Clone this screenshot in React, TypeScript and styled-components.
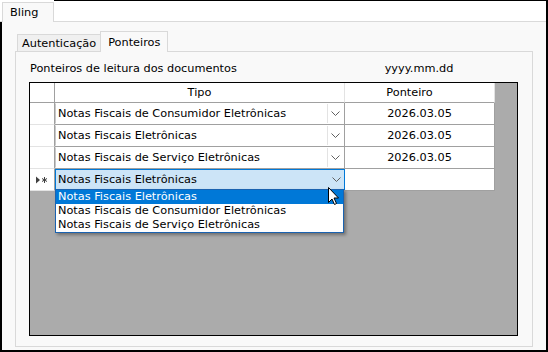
import React from 'react';
import styled, { createGlobalStyle } from 'styled-components';

const GlobalStyle = createGlobalStyle`
  html, body { margin: 0; padding: 0; background: #fff; }
  body {
    font-family: "DejaVu Sans", "Liberation Sans", sans-serif;
    font-size: 11.3px;
    color: #000;
  }
  * { box-sizing: border-box; }
`;

const Frame = styled.div`
  width: 548px;
  height: 352px;
  display: flex;
  flex-direction: column;
  border-right: 2px solid #000;
  border-bottom: 2px solid #000;
  background: #f9f9f9;
`;

const TabStrip = styled.div`
  display: flex;
  height: 22px;
  background: #fff;
`;

const StripEdge = styled.div`
  width: 2px;
  border-bottom: 1px solid #dadada;
`;

const OuterTab = styled.div`
  width: 52px;
  height: 20px;
  margin-top: 2px;
  padding-left: 7px;
  display: flex;
  align-items: center;
  background: #f9f9f9;
  border: 1px solid #d9d9d9;
  border-bottom: none;
`;

const StripFiller = styled.div`
  flex: 1;
  border-top: 1px solid #000;
  border-bottom: 1px solid #dadada;
`;

const OuterPage = styled.div`
  flex: 1;
  display: flex;
  flex-direction: column;
  border-left: 2px solid #000;
  padding: 9px 13px 3px 13px;
`;

const InnerStrip = styled.div`
  display: flex;
  align-items: flex-end;
  height: 21px;
  padding-left: 2px;
  margin-bottom: -1px;
  position: relative;
  z-index: 1;
`;

const InnerTab = styled.div<{ $active?: boolean }>`
  height: ${(p) => (p.$active ? 21 : 18)}px;
  padding: 0 ${(p) => (p.$active ? 7 : 4)}px;
  margin-left: ${(p) => (p.$active ? -1 : 0)}px;
  display: flex;
  align-items: center;
  white-space: nowrap;
  background: ${(p) => (p.$active ? '#f9f9f9' : '#f0f0f0')};
  border: 1px solid #d9d9d9;
  border-bottom: ${(p) => (p.$active ? 'none' : '1px solid #d9d9d9')};
`;

const InnerPage = styled.div`
  flex: 1;
  display: flex;
  flex-direction: column;
  border: 1px solid #d9d9d9;
  padding: 10px 14px 10px 13px;
  background: #f9f9f9;
`;

const LabelRow = styled.div`
  display: grid;
  grid-template-columns: 315px 150px;
  line-height: 14px;
  margin-bottom: 6px;
  white-space: nowrap;
`;

const Caption = styled.span<{ $center?: boolean }>`
  padding-left: ${(p) => (p.$center ? 0 : 1)}px;
  text-align: ${(p) => (p.$center ? 'center' : 'left')};
`;

const Grid = styled.div`
  flex: 1;
  display: flex;
  flex-direction: column;
  border: 1px solid #000;
  background: #ababab;
`;

const Row = styled.div<{ $h: number }>`
  display: grid;
  grid-template-columns: 25px 290px 150px;
  height: ${(p) => p.$h}px;
`;

const HeadCell = styled.div<{ $padRight?: number; $edge?: boolean }>`
  background: #fff;
  border-right: 1px solid ${(p) => (p.$edge ? '#a0a0a0' : '#e3e3e3')};
  border-bottom: 1px solid #a0a0a0;
  display: flex;
  align-items: center;
  justify-content: center;
  padding-right: ${(p) => p.$padRight ?? 0}px;
`;

const RowHead = styled.div`
  background: #fff;
  border-right: 1px solid #a0a0a0;
  border-bottom: 1px solid #e3e3e3;
  display: flex;
  align-items: center;
  justify-content: center;
`;

const TipoCell = styled.div`
  position: relative;
  background: #fff;
  border-right: 1px solid #a0a0a0;
  border-bottom: 1px solid #a0a0a0;
`;

const Combo = styled.div<{ $open?: boolean }>`
  height: 21px;
  display: flex;
  align-items: center;
  padding-left: 2px;
  white-space: nowrap;
  background: ${(p) => (p.$open ? '#cce4f7' : '#fff')};
  border: 1px solid ${(p) => (p.$open ? '#0078d7' : 'transparent')};
  border-left-color: ${(p) => (p.$open ? '#0078d7' : '#c8c8c8')};
  margin-right: ${(p) => (p.$open ? -1 : 0)}px;
`;

const ComboText = styled.span`
  flex: 1;
`;

const DropButton = styled.div<{ $open?: boolean }>`
  width: 16px;
  height: 100%;
  display: flex;
  align-items: center;
  justify-content: center;
  border-left: 1px solid ${(p) => (p.$open ? 'transparent' : '#e3e3e3')};
`;

const DateCell = styled.div`
  background: #fff;
  border-right: 1px solid #a0a0a0;
  border-bottom: 1px solid #a0a0a0;
  display: flex;
  align-items: center;
  justify-content: center;
`;

const DropList = styled.div`
  position: absolute;
  top: 20px;
  left: 0;
  width: 289px;
  z-index: 2;
  background: #fff;
  border: 1px solid #1a62b0;
  box-shadow: 2px 2px 3px rgba(0, 0, 0, 0.35);
`;

const DropItem = styled.div<{ $selected?: boolean }>`
  height: 14px;
  line-height: 14px;
  padding-left: 2px;
  white-space: nowrap;
  background: ${(p) => (p.$selected ? '#0078d7' : '#fff')};
  color: ${(p) => (p.$selected ? '#fff' : '#000')};
`;

const Pointer = styled.svg`
  position: absolute;
  left: 273px;
  top: 18px;
  z-index: 3;
`;

const Chevron = () => (
  <svg width="9" height="5" viewBox="0 0 9 5">
    <polyline points="0.5,0.5 4.5,4.5 8.5,0.5" fill="none" stroke="#606060" strokeWidth="1" />
  </svg>
);

const NewRowGlyph = () => (
  <svg width="12" height="8" viewBox="0 0 12 8">
    <polygon points="0,0.5 4,4 0,7.5" fill="#404040" />
    <g stroke="#404040" strokeWidth="1">
      <line x1="8.5" y1="1" x2="8.5" y2="7" />
      <line x1="6" y1="2.5" x2="11" y2="5.5" />
      <line x1="6" y1="5.5" x2="11" y2="2.5" />
    </g>
  </svg>
);

const tipos = [
  'Notas Fiscais Eletrônicas',
  'Notas Fiscais de Consumidor Eletrônicas',
  'Notas Fiscais de Serviço Eletrônicas',
];

const rows = [
  { tipo: tipos[1], ponteiro: '2026.03.05' },
  { tipo: tipos[0], ponteiro: '2026.03.05' },
  { tipo: tipos[2], ponteiro: '2026.03.05' },
];

export default function App() {
  return (
    <>
      <GlobalStyle />
      <Frame>
        <TabStrip>
          <StripEdge />
          <OuterTab>Bling</OuterTab>
          <StripFiller />
        </TabStrip>
        <OuterPage>
          <InnerStrip>
            <InnerTab>Autenticação</InnerTab>
            <InnerTab $active>Ponteiros</InnerTab>
          </InnerStrip>
          <InnerPage>
            <LabelRow>
              <Caption>Ponteiros de leitura dos documentos</Caption>
              <Caption $center>yyyy.mm.dd</Caption>
            </LabelRow>
            <Grid>
              <Row $h={20}>
                <HeadCell $edge />
                <HeadCell>Tipo</HeadCell>
                <HeadCell $padRight={20}>Ponteiro</HeadCell>
              </Row>
              {rows.map((r, i) => (
                <Row $h={22} key={i}>
                  <RowHead />
                  <TipoCell>
                    <Combo>
                      <ComboText>{r.tipo}</ComboText>
                      <DropButton>
                        <Chevron />
                      </DropButton>
                    </Combo>
                  </TipoCell>
                  <DateCell>{r.ponteiro}</DateCell>
                </Row>
              ))}
              <Row $h={22}>
                <RowHead>
                  <NewRowGlyph />
                </RowHead>
                <TipoCell>
                  <Combo $open>
                    <ComboText>{tipos[0]}</ComboText>
                    <DropButton $open>
                      <Chevron />
                    </DropButton>
                  </Combo>
                  <DropList>
                    {tipos.map((t, i) => (
                      <DropItem key={t} $selected={i === 0}>
                        {t}
                      </DropItem>
                    ))}
                  </DropList>
                  <Pointer width="12" height="19" viewBox="0 0 12 19">
                    <path
                      d="M0.5 0.5 L0.5 15.5 L4 12 L6.5 17.5 L8.5 16.5 L6 11 L10.5 11 Z"
                      fill="#fff"
                      stroke="#000"
                      strokeWidth="1"
                      strokeLinejoin="miter"
                    />
                  </Pointer>
                </TipoCell>
                <DateCell />
              </Row>
            </Grid>
          </InnerPage>
        </OuterPage>
      </Frame>
    </>
  );
}
